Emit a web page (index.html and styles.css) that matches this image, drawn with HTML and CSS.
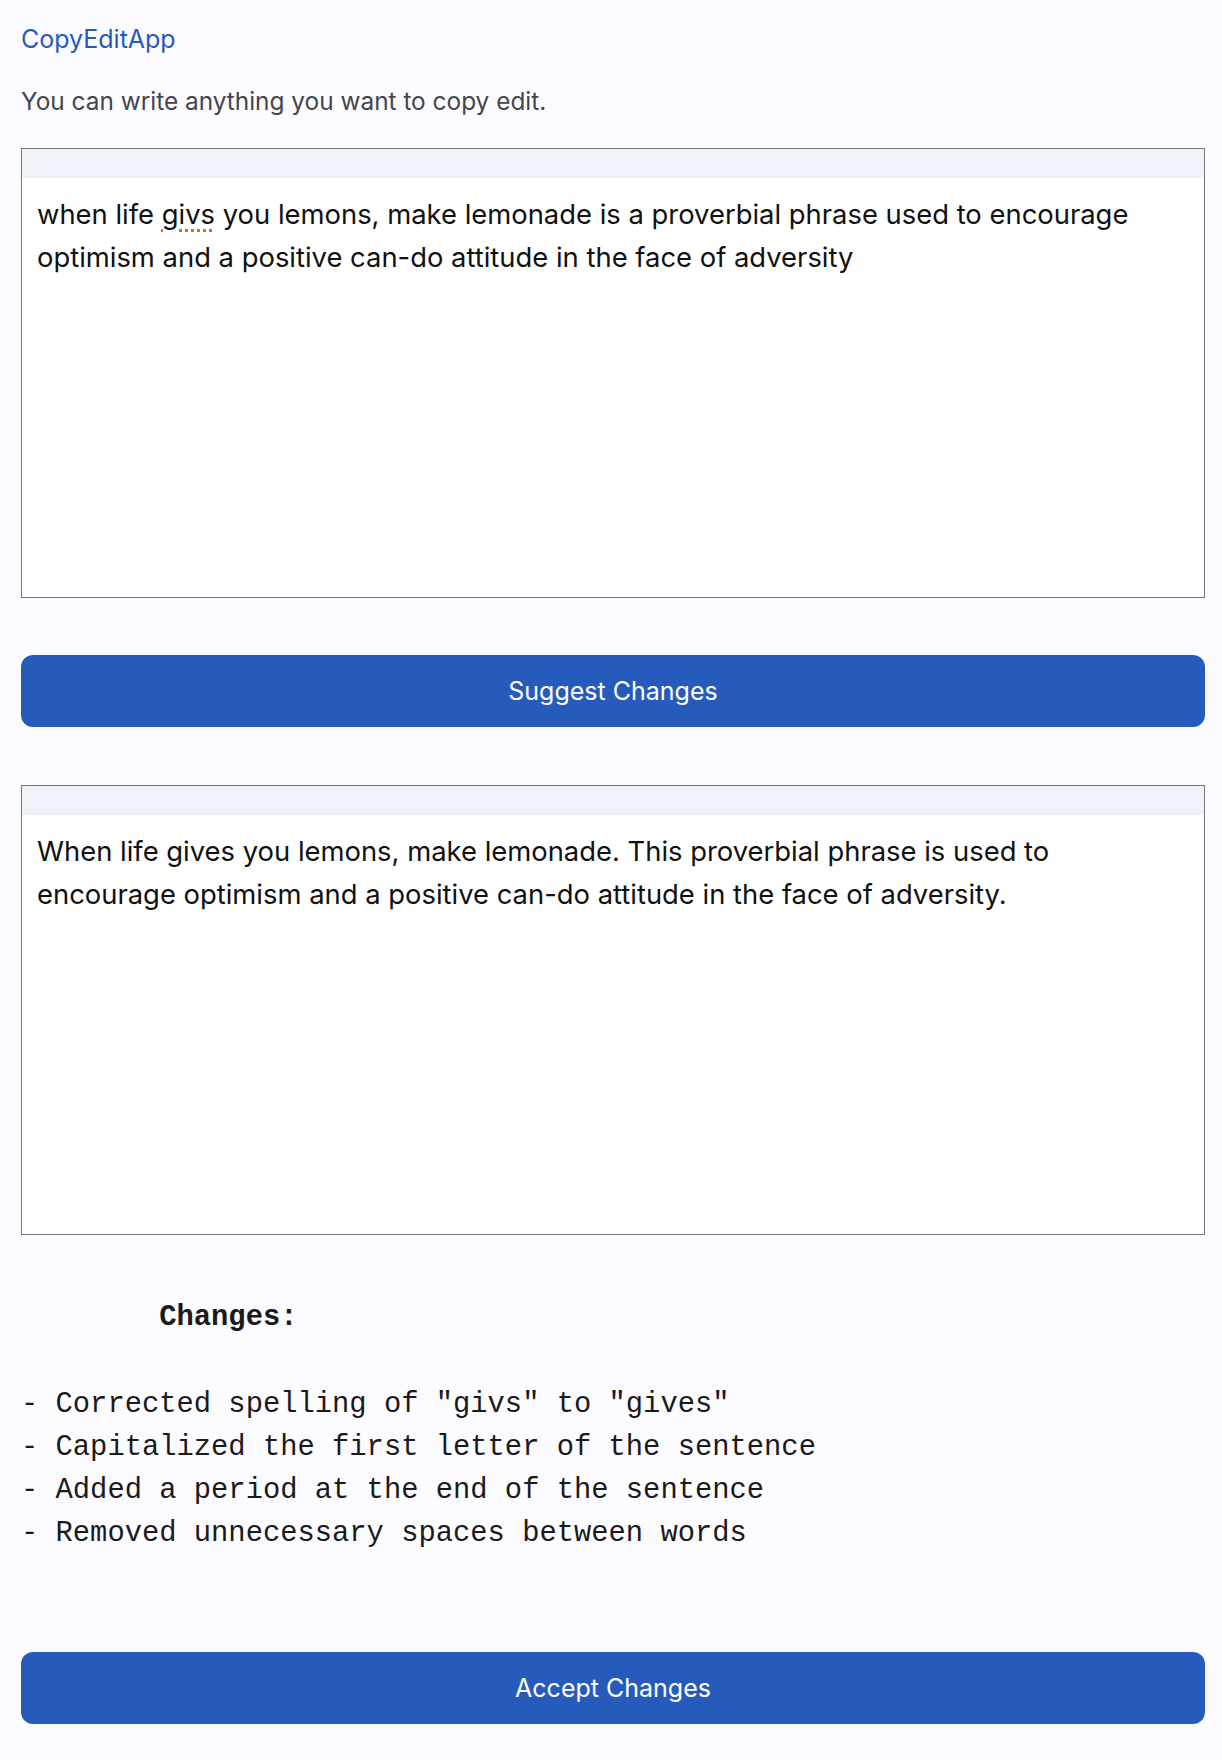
FILE: index.html
```html
<!DOCTYPE html>
<html lang="en">
<head>
<meta charset="utf-8">
<title>CopyEditApp</title>
<link rel="stylesheet" href="styles.css">
</head>
<body>
<main class="app">
  <a class="brand" href="#">CopyEditApp</a>
  <p class="intro">You can write anything you want to copy edit.</p>

  <section class="editor">
    <div class="editor-bar"></div>
    <div class="editor-body">when life <span class="misspelled">givs</span> you lemons, make lemonade is a proverbial phrase used to encourage optimism and a positive can-do attitude in the face of adversity</div>
  </section>

  <button class="action suggest" type="button">Suggest Changes</button>

  <section class="editor result">
    <div class="editor-bar"></div>
    <div class="editor-body">When life gives you lemons, make lemonade. This proverbial phrase is used to encourage optimism and a positive can-do attitude in the face of adversity.</div>
  </section>

  <pre class="changes">	<b>Changes:</b>

- Corrected spelling of "givs" to "gives"
- Capitalized the first letter of the sentence
- Added a period at the end of the sentence
- Removed unnecessary spaces between words</pre>

  <button class="action accept" type="button">Accept Changes</button>
</main>
</body>
</html>
```

FILE: styles.css
```css
html, body {
  margin: 0;
  padding: 0;
  background: #fcfbff;
}

body {
  font-family: Inter, "Noto Sans", "Liberation Sans", sans-serif;
  color: #111;
}

.app {
  display: flex;
  flex-direction: column;
  align-items: stretch;
  padding: 21px 17px 30px 21px;
}

.brand {
  align-self: flex-start;
  font-size: 25px;
  line-height: 36px;
  color: #2659bd;
  text-decoration: none;
}

.intro {
  margin: 26px 0 0;
  font-size: 24.4px;
  line-height: 36px;
  color: #45454d;
}

.editor {
  margin-top: 29px;
  height: 450px;
  box-sizing: border-box;
  border: 1px solid #77767c;
  background: #ffffff;
  display: flex;
  flex-direction: column;
}

.editor.result {
  margin-top: 58px;
}

.editor-bar {
  height: 29px;
  background: #eff3f9;
  flex: none;
}

.editor-body {
  padding: 15px 15px 15px 15px;
  font-size: 27.4px;
  line-height: 43px;
  color: #111111;
}

.misspelled {
  text-decoration-line: underline;
  text-decoration-style: dotted;
  text-decoration-color: #e8594a;
  text-decoration-thickness: 3px;
  text-underline-offset: 5px;
}

.action {
  height: 72px;
  margin-top: 57px;
  border: none;
  border-radius: 12px;
  background: #265bbb;
  color: #ffffff;
  font-family: Inter, "Noto Sans", "Liberation Sans", sans-serif;
  font-size: 25px;
  cursor: pointer;
}

.changes {
  margin: 61px 0 0;
  font-family: "Liberation Mono", "Courier New", monospace;
  font-size: 28.8px;
  line-height: 43.3px;
  color: #1a1a1a;
  tab-size: 8;
}

.changes b {
  font-weight: bold;
}

.action.accept {
  margin-top: 96px;
}
```
